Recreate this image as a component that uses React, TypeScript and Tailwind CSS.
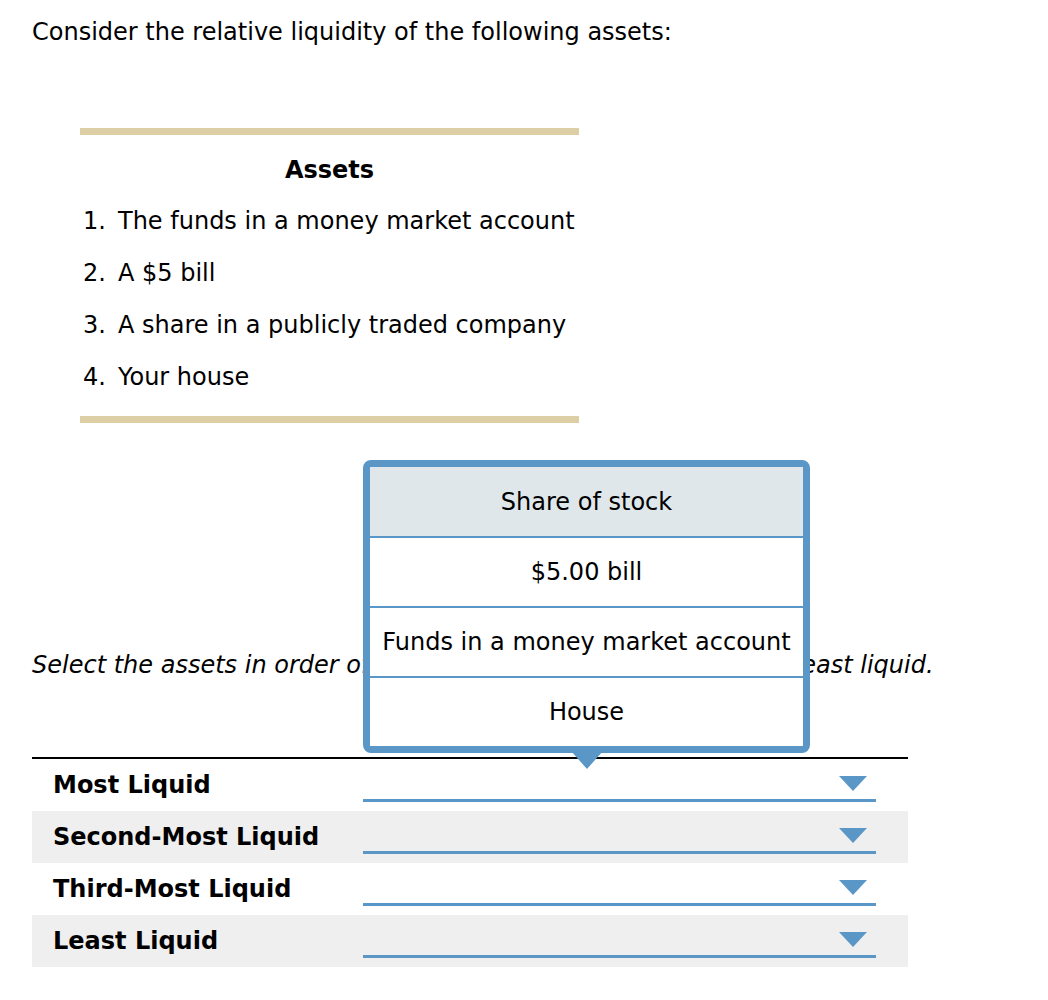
import React from 'react'

// Liquidity ordering question — static recreation with the first dropdown open

const ASSETS = [
  'The funds in a money market account',
  'A $5 bill',
  'A share in a publicly traded company',
  'Your house',
]

const OPTIONS = ['Share of stock', '$5.00 bill', 'Funds in a money market account', 'House']

const RANKS = ['Most Liquid', 'Second-Most Liquid', 'Third-Most Liquid', 'Least Liquid']

function Caret() {
  return (
    <svg width="28" height="15" viewBox="0 0 28 15" className="block">
      <polygon points="0,0 28,0 14,15" fill="#5a96c6" />
    </svg>
  )
}

function OpenMenu() {
  return (
    <div className="absolute left-0 bottom-[42px] w-[447px] z-10">
      <div className="rounded-[8px] border-[7px] border-[#5a96c6] bg-white overflow-hidden">
        {OPTIONS.map((o, i) => (
          <div
            key={o}
            className={
              'flex items-center justify-center text-center ' +
              (i === 0 ? 'h-[69px] bg-[#dfe7ea]' : 'h-[70px] bg-white border-t-2 border-[#5a96c6]')
            }
          >
            {o}
          </div>
        ))}
      </div>
      <div className="flex justify-center -mt-[2px]">
        <svg width="32" height="18" viewBox="0 0 32 18" className="block">
          <polygon points="0,0 32,0 16,18" fill="#5a96c6" />
        </svg>
      </div>
    </div>
  )
}

function Dropdown({ open }: { open?: boolean }) {
  return (
    <div className="relative w-[513px] h-[52px]">
      {open && <OpenMenu />}
      <div className="absolute right-[9px] top-[17px]">
        <Caret />
      </div>
      <div className="absolute left-0 right-0 top-[40px] h-[3px] bg-[#5a96c6]" />
    </div>
  )
}

export default function App() {
  return (
    <div
      className="min-h-[1000px] bg-white text-black text-[24px] pl-[32px] pt-[18px]"
      style={{ fontFamily: '"DejaVu Sans", Verdana, sans-serif' }}
    >
      <p className="leading-[28px]">Consider the relative liquidity of the following assets:</p>

      <div className="mt-[82px] ml-[48px] w-[499px]">
        <div className="h-[7px] bg-[#dccfa5]" />
        <div className="mt-[10px] h-[50px] flex items-center justify-center font-bold">Assets</div>
        {ASSETS.map((a, i) => (
          <div key={a} className="h-[52px] flex items-center pl-[3px] whitespace-nowrap">
            <span className="w-[35px]">{i + 1}.</span>
            <span>{a}</span>
          </div>
        ))}
        <div className="mt-[13px] h-[7px] bg-[#dccfa5]" />
      </div>

      {/* middle of the sentence sits under the open menu */}
      <p className="mt-[228px] leading-[28px] italic whitespace-nowrap">
        Select the assets in order o
        <span className="tracking-[0.2px]">f their liquidity, from most liquid to l</span>
        east liquid.
      </p>

      <div className="mt-[78px] w-[876px] border-t-2 border-black">
        {RANKS.map((r, i) => (
          <div
            key={r}
            className={'h-[52px] flex items-center ' + (i % 2 === 1 ? 'bg-[#efefef]' : 'bg-white')}
          >
            <div className="w-[331px] pl-[21px] font-bold whitespace-nowrap">{r}</div>
            <Dropdown open={i === 0} />
          </div>
        ))}
      </div>
    </div>
  )
}
